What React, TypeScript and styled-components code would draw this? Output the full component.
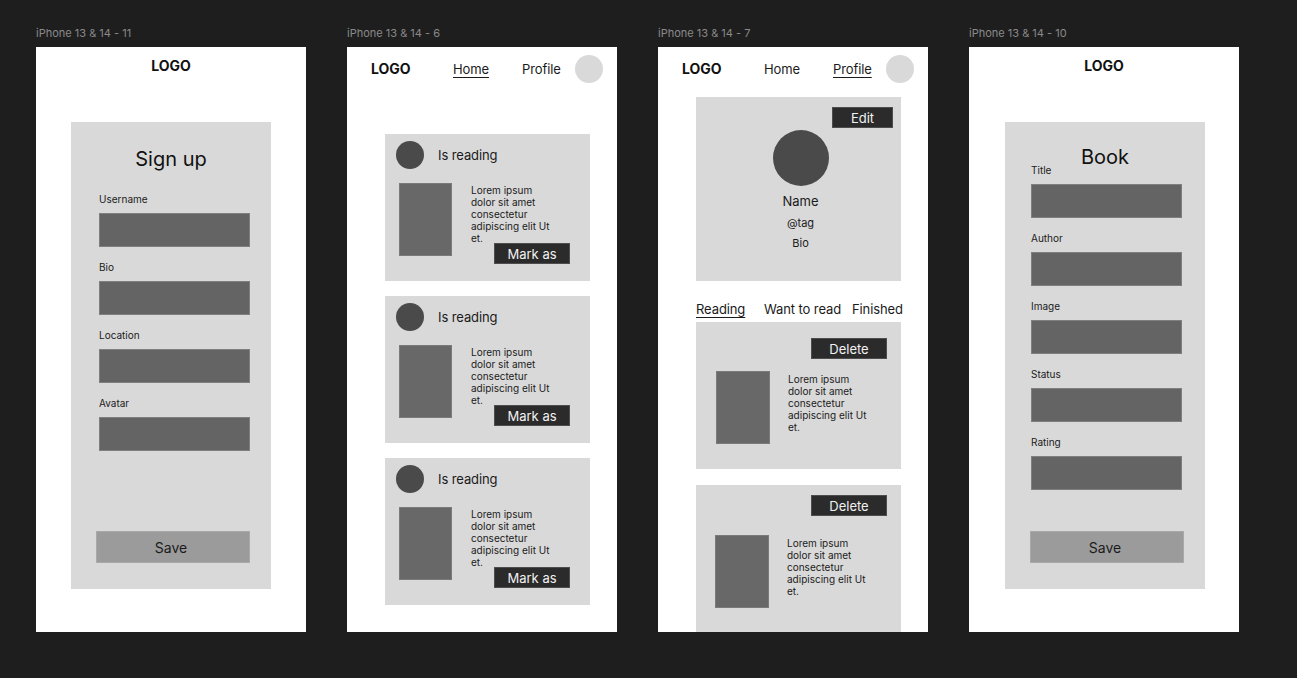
import React from "react";
import styled, { createGlobalStyle } from "styled-components";

const GlobalStyle = createGlobalStyle`
  html, body {
    margin: 0;
    background: #1e1e1e;
  }
  body {
    font-family: Inter, "Noto Sans", sans-serif;
    color: #1b1b1b;
  }
`;

const Canvas = styled.div`
  display: flex;
  gap: 41px;
  padding: 26px 0 0 36px;
  height: 678px;
  box-sizing: border-box;
`;

const Column = styled.div`
  display: flex;
  flex-direction: column;
  width: 270px;
`;

const FrameLabel = styled.div`
  font-size: 11px;
  line-height: 14px;
  color: #8a8a8a;
  margin-bottom: 7px;
  white-space: nowrap;
`;

const Frame = styled.div`
  width: 270px;
  height: 585px;
  background: #ffffff;
  overflow: hidden;
  display: flex;
  flex-direction: column;
`;

const Logo = styled.div`
  font-size: 14px;
  line-height: 16px;
  font-weight: 700;
  color: #111;
`;

const CenterHeader = styled(Logo)`
  text-align: center;
  padding-top: 11px;
`;

/* ---------- form frames ---------- */

const FormCard = styled.div<{ $padLeft: number; $x: number }>`
  margin: 48px 0 0 ${(p) => p.$x}px;
  width: 200px;
  height: 467px;
  box-sizing: border-box;
  background: #d9d9d9;
  display: flex;
  flex-direction: column;
  padding: 0 21px 26px ${(p) => p.$padLeft}px;
`;

const FormTitle = styled.div<{ $top: number; $padLeft: number }>`
  font-size: 20px;
  line-height: 24px;
  text-align: center;
  margin: ${(p) => p.$top}px -21px 0 -${(p) => p.$padLeft}px;
  color: #111;
`;

const Fields = styled.div<{ $gap: number }>`
  display: flex;
  flex-direction: column;
  gap: 14px;
  margin-top: ${(p) => p.$gap}px;
`;

const Field = styled.div`
  display: flex;
  flex-direction: column;
  gap: 8px;
`;

const FieldLabel = styled.div`
  font-size: 10px;
  line-height: 12px;
  color: #1b1b1b;
`;

const Input = styled.div`
  width: 151px;
  height: 34px;
  box-sizing: border-box;
  background: #646464;
  border: 1px solid #7f7f7f;
`;

const SaveButton = styled.div<{ $shift: number }>`
  margin-top: auto;
  margin-left: ${(p) => p.$shift}px;
  width: 154px;
  height: 32px;
  box-sizing: border-box;
  padding-right: 4px;
  background: #9b9b9b;
  border: 1px solid #a9a9a9;
  display: flex;
  align-items: center;
  justify-content: center;
  font-size: 14px;
  color: #1b1b1b;
`;

/* ---------- nav ---------- */

const Nav = styled.div`
  display: grid;
  grid-template-columns: 82px 69px 53px 28px;
  align-items: center;
  height: 28px;
  padding: 8px 14px 0 24px;
`;

const NavLink = styled.span<{ $active?: boolean }>`
  font-size: 13px;
  line-height: 16px;
  letter-spacing: -0.1px;
  color: #1b1b1b;
  justify-self: start;
  text-decoration: ${(p) => (p.$active ? "underline" : "none")};
  text-underline-offset: 3px;
  text-decoration-thickness: 1px;
`;

const Circle = styled.div<{ $size: number; $tone: string }>`
  width: ${(p) => p.$size}px;
  height: ${(p) => p.$size}px;
  border-radius: 50%;
  background: ${(p) => p.$tone};
  flex-shrink: 0;
`;

/* ---------- shared book pieces ---------- */

const Cover = styled.div<{ $w: number }>`
  width: ${(p) => p.$w}px;
  height: 73px;
  box-sizing: border-box;
  background: #686868;
  border: 1px solid #7a7a7a;
  flex-shrink: 0;
`;

const Blurb = styled.div<{ $top: number }>`
  width: 80px;
  font-size: 10px;
  line-height: 12px;
  color: #1b1b1b;
  margin-top: ${(p) => p.$top}px;
`;

const DarkButton = styled.div<{ $w: number }>`
  width: ${(p) => p.$w}px;
  height: 21px;
  box-sizing: border-box;
  background: #2b2b2b;
  border: 1px solid #4d4d4d;
  color: #f2f2f2;
  font-size: 13px;
  display: flex;
  align-items: center;
  justify-content: center;
  flex-shrink: 0;
`;

/* ---------- home feed ---------- */

const Feed = styled.div`
  display: flex;
  flex-direction: column;
  gap: 15px;
  margin: 51px 0 0 38px;
`;

const FeedCard = styled.div`
  width: 205px;
  height: 147px;
  box-sizing: border-box;
  background: #d9d9d9;
  padding: 7px 20px 0 11px;
`;

const Reader = styled.div`
  display: flex;
  align-items: center;
  gap: 14px;
  font-size: 13px;
  line-height: 16px;
  letter-spacing: -0.1px;
`;

const FeedBody = styled.div`
  display: flex;
  gap: 19px;
  margin-top: 14px;
  padding-left: 3px;
`;

const FeedText = styled.div`
  width: 99px;
  display: flex;
  flex-direction: column;
  & > ${DarkButton} {
    align-self: flex-end;
    margin-top: -1px;
  }
`;

/* ---------- profile ---------- */

const ProfileCard = styled.div`
  margin: 14px 0 0 38px;
  width: 205px;
  height: 184px;
  box-sizing: border-box;
  background: #d9d9d9;
  display: flex;
  flex-direction: column;
  align-items: center;
  padding: 10px 8px 0 12px;
  & > ${DarkButton} {
    align-self: flex-end;
  }
`;

const ProfileLine = styled.div<{ $size: number; $top: number }>`
  font-size: ${(p) => p.$size}px;
  line-height: ${(p) => p.$size + 3}px;
  margin-top: ${(p) => p.$top}px;
  color: #1b1b1b;
`;

const Tabs = styled.div`
  display: grid;
  grid-template-columns: 68px 88px auto;
  margin: 20px 0 0 38px;
`;

const Shelf = styled.div`
  display: flex;
  flex-direction: column;
  gap: 16px;
  margin: 5px 0 0 38px;
`;

const ShelfCard = styled.div`
  width: 205px;
  height: 147px;
  flex-shrink: 0;
  box-sizing: border-box;
  background: #d9d9d9;
  display: flex;
  flex-direction: column;
  padding: 0 14px 0 20px;
`;

const ShelfTop = styled.div<{ $h: number; $btn: number }>`
  height: ${(p) => p.$h}px;
  display: flex;
  justify-content: flex-end;
  align-items: flex-start;
  padding-top: ${(p) => p.$btn}px;
  box-sizing: border-box;
`;

const ShelfBody = styled.div<{ $indent: number }>`
  display: flex;
  gap: 18px;
  margin-left: ${(p) => p.$indent}px;
`;

const lorem = "Lorem ipsum dolor sit amet consectetur adipiscing elit Ut et.";

const TopNav: React.FC<{ active: "home" | "profile" }> = ({ active }) => (
  <Nav>
    <Logo>LOGO</Logo>
    <NavLink $active={active === "home"}>Home</NavLink>
    <NavLink $active={active === "profile"}>Profile</NavLink>
    <Circle $size={28} $tone="#d9d9d9" />
  </Nav>
);

const FeedItem = () => (
  <FeedCard>
    <Reader>
      <Circle $size={28} $tone="#4a4a4a" />
      Is reading
    </Reader>
    <FeedBody>
      <Cover $w={53} />
      <FeedText>
        <Blurb $top={1}>{lorem}</Blurb>
        <DarkButton $w={76}>Mark as</DarkButton>
      </FeedText>
    </FeedBody>
  </FeedCard>
);

const ShelfItem: React.FC<{ head: number; btn: number; indent: number }> = ({
  head,
  btn,
  indent,
}) => (
  <ShelfCard>
    <ShelfTop $h={head} $btn={btn}>
      <DarkButton $w={76}>Delete</DarkButton>
    </ShelfTop>
    <ShelfBody $indent={indent}>
      <Cover $w={54} />
      <Blurb $top={2}>{lorem}</Blurb>
    </ShelfBody>
  </ShelfCard>
);

const signupFields = ["Username", "Bio", "Location", "Avatar"];
const bookFields = ["Title", "Author", "Image", "Status", "Rating"];

export default function App() {
  return (
    <>
      <GlobalStyle />
      <Canvas>
        <Column>
          <FrameLabel>iPhone 13 &amp; 14 - 11</FrameLabel>
          <Frame>
            <CenterHeader>LOGO</CenterHeader>
            <FormCard $padLeft={28} $x={35}>
              <FormTitle $top={25} $padLeft={28}>
                Sign up
              </FormTitle>
              <Fields $gap={22}>
                {signupFields.map((f) => (
                  <Field key={f}>
                    <FieldLabel>{f}</FieldLabel>
                    <Input />
                  </Field>
                ))}
              </Fields>
              <SaveButton $shift={-3}>Save</SaveButton>
            </FormCard>
          </Frame>
        </Column>

        <Column>
          <FrameLabel>iPhone 13 &amp; 14 - 6</FrameLabel>
          <Frame>
            <TopNav active="home" />
            <Feed>
              <FeedItem />
              <FeedItem />
              <FeedItem />
            </Feed>
          </Frame>
        </Column>

        <Column>
          <FrameLabel>iPhone 13 &amp; 14 - 7</FrameLabel>
          <Frame>
            <TopNav active="profile" />
            <ProfileCard>
              <DarkButton $w={61}>Edit</DarkButton>
              <ProfileLine $size={0} $top={2}>
                <Circle $size={56} $tone="#4a4a4a" />
              </ProfileLine>
              <ProfileLine $size={13} $top={7}>Name</ProfileLine>
              <ProfileLine $size={11} $top={7}>@tag</ProfileLine>
              <ProfileLine $size={11} $top={6}>Bio</ProfileLine>
            </ProfileCard>
            <Tabs>
              <NavLink $active>Reading</NavLink>
              <NavLink>Want to read</NavLink>
              <NavLink>Finished</NavLink>
            </Tabs>
            <Shelf>
              <ShelfItem head={49} btn={16} indent={0} />
              <ShelfItem head={50} btn={10} indent={-1} />
            </Shelf>
          </Frame>
        </Column>

        <Column>
          <FrameLabel>iPhone 13 &amp; 14 - 10</FrameLabel>
          <Frame>
            <CenterHeader>LOGO</CenterHeader>
            <FormCard $padLeft={26} $x={36}>
              <FormTitle $top={23} $padLeft={26}>
                Book
              </FormTitle>
              <Fields $gap={-5}>
                {bookFields.map((f) => (
                  <Field key={f}>
                    <FieldLabel>{f}</FieldLabel>
                    <Input />
                  </Field>
                ))}
              </Fields>
              <SaveButton $shift={-1}>Save</SaveButton>
            </FormCard>
          </Frame>
        </Column>
      </Canvas>
    </>
  );
}
